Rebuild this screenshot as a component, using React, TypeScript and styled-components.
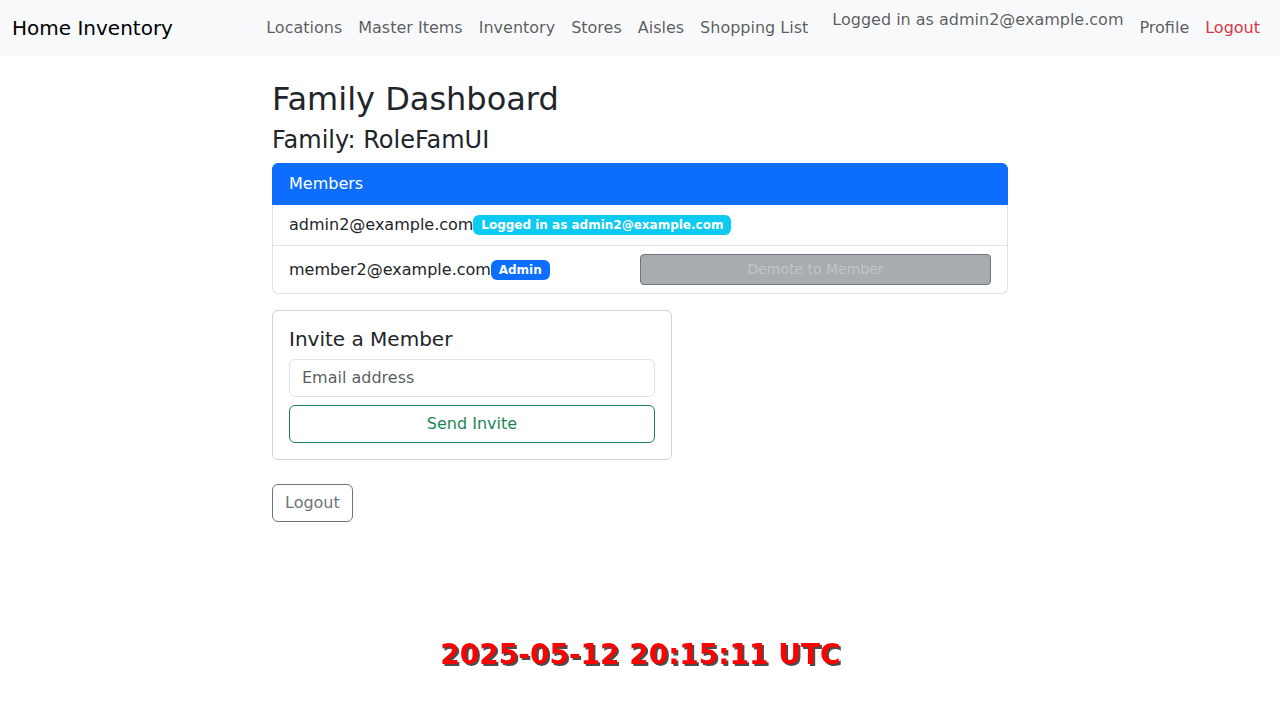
import React from "react";
import styled, { createGlobalStyle } from "styled-components";

const GlobalStyle = createGlobalStyle`
  *, *::before, *::after { box-sizing: border-box; }
  body {
    margin: 0;
    font-family: "DejaVu Sans", sans-serif;
    font-size: 16px;
    line-height: 1.5;
    color: #212529;
    background: #fff;
  }
  button, input { font-family: inherit; line-height: inherit; margin: 0; }
`;

const Navbar = styled.nav`
  display: flex;
  align-items: center;
  justify-content: space-between;
  height: 56px;
  padding: 8px 12px;
  background: #f8f9fb;
`;

const Brand = styled.a`
  font-size: 20px;
  color: #000;
  white-space: nowrap;
`;

const NavList = styled.ul`
  display: flex;
  margin: 0;
  padding: 0;
  list-style: none;
`;

const NavLink = styled.a<{ $danger?: boolean }>`
  display: block;
  padding: 8px;
  white-space: nowrap;
  color: ${(p) => (p.$danger ? "#dc3545" : "rgba(0, 0, 0, 0.65)")};
`;

const NavText = styled.span`
  margin: 0 8px 0 16px;
  white-space: nowrap;
  color: rgba(0, 0, 0, 0.65);
`;

const Container = styled.main`
  width: 736px;
  margin: 24px auto 0;
`;

const Title = styled.h2`
  margin: 0 0 8px;
  font-size: 32px;
  font-weight: 500;
  line-height: 1.2;
`;

const FamilyName = styled.h4`
  margin: 0 0 8px;
  font-size: 24px;
  font-weight: 500;
  line-height: 1.2;
`;

const Members = styled.ul`
  margin: 0 0 16px;
  padding: 0;
  list-style: none;
  border-radius: 6px;
`;

const MemberRow = styled.li<{ $header?: boolean }>`
  display: flex;
  align-items: center;
  padding: 8px 16px;
  border: 1px solid ${(p) => (p.$header ? "#0d6efd" : "#dee2e6")};
  background: ${(p) => (p.$header ? "#0d6efd" : "#fff")};
  color: ${(p) => (p.$header ? "#fff" : "#212529")};
  & + & { border-top-width: 0; }
  &:first-child { border-radius: 6px 6px 0 0; }
  &:last-child { border-radius: 0 0 6px 6px; }
`;

const MemberInfo = styled.div`
  display: flex;
  align-items: center;
  flex: 1;
`;

const Badge = styled.span<{ $info?: boolean }>`
  padding: 4.2px 7.8px;
  border-radius: 6px;
  font-size: 12px;
  font-weight: 700;
  line-height: 1;
  color: #fff;
  background: ${(p) => (p.$info ? "#0dcaf0" : "#0d6efd")};
`;

const DemoteButton = styled.button`
  flex: 0 0 50%;
  padding: 4px 8px;
  border: 1px solid #6c757d;
  border-radius: 4px;
  font-size: 14px;
  color: #c1c5c8;
  background: #a7acb1;
`;

const Card = styled.section`
  display: flex;
  flex-direction: column;
  width: 400px;
  padding: 16px;
  border: 1px solid rgba(0, 0, 0, 0.176);
  border-radius: 6px;
`;

const CardTitle = styled.h5`
  margin: 0 0 8px;
  font-size: 20px;
  font-weight: 500;
  line-height: 1.2;
`;

const EmailInput = styled.input`
  margin-bottom: 8px;
  padding: 6px 12px;
  border: 1px solid #dee2e6;
  border-radius: 6px;
  font-size: 16px;
  &::placeholder { color: rgba(33, 37, 41, 0.75); opacity: 1; }
`;

const OutlineButton = styled.button<{ $color: string }>`
  padding: 6px 12px;
  border: 1px solid ${(p) => p.$color};
  border-radius: 6px;
  font-size: 16px;
  color: ${(p) => p.$color};
  background: transparent;
`;

const Footer = styled.div`
  margin-top: 24px;
`;

const Timestamp = styled.div`
  position: fixed;
  left: 1px;
  right: 0;
  bottom: 44px;
  text-align: center;
  font-size: 28px;
  font-weight: 700;
  line-height: 42px;
  color: #f00;
  text-shadow: 2px 2px 0 #4c4c4c;
`;

const links = ["Locations", "Master Items", "Inventory", "Stores", "Aisles", "Shopping List"];

export default function App() {
  return (
    <>
      <GlobalStyle />
      <Navbar>
        <Brand>Home Inventory</Brand>
        <NavList>
          {links.map((label) => (
            <li key={label}><NavLink>{label}</NavLink></li>
          ))}
          <li><NavText>Logged in as admin2@example.com</NavText></li>
          <li><NavLink>Profile</NavLink></li>
          <li><NavLink $danger>Logout</NavLink></li>
        </NavList>
      </Navbar>
      <Container>
        <Title>Family Dashboard</Title>
        <FamilyName>Family: RoleFamUI</FamilyName>
        <Members>
          <MemberRow $header>Members</MemberRow>
          <MemberRow>
            <MemberInfo>
              admin2@example.com<Badge $info>Logged in as admin2@example.com</Badge>
            </MemberInfo>
          </MemberRow>
          <MemberRow>
            <MemberInfo>
              member2@example.com<Badge>Admin</Badge>
            </MemberInfo>
            <DemoteButton disabled>Demote to Member</DemoteButton>
          </MemberRow>
        </Members>
        <Card>
          <CardTitle>Invite a Member</CardTitle>
          <EmailInput type="email" placeholder="Email address" />
          <OutlineButton $color="#198754">Send Invite</OutlineButton>
        </Card>
        <Footer>
          <OutlineButton $color="#6c757d">Logout</OutlineButton>
        </Footer>
      </Container>
      <Timestamp>2025-05-12 20:15:11 UTC</Timestamp>
    </>
  );
}
